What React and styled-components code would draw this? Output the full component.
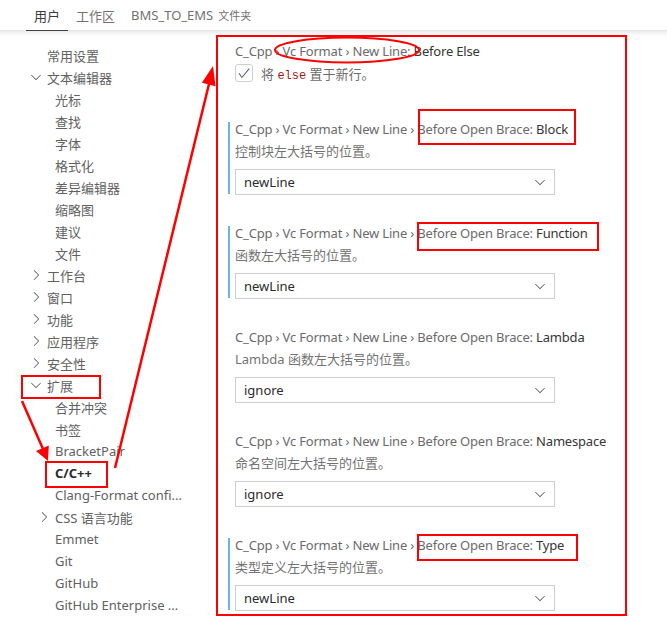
import React from "react";
import styled, { createGlobalStyle } from "styled-components";

const GlobalStyle = createGlobalStyle`
  body {
    margin: 0;
    background: #fff;
    font-family: "Noto Sans", "Noto Sans CJK SC", sans-serif;
  }
`;

const treeItems = [
  { label: "常用设置", level: 0 },
  { label: "文本编辑器", level: 0, chevron: "down" },
  { label: "光标", level: 1 },
  { label: "查找", level: 1 },
  { label: "字体", level: 1 },
  { label: "格式化", level: 1 },
  { label: "差异编辑器", level: 1 },
  { label: "缩略图", level: 1 },
  { label: "建议", level: 1 },
  { label: "文件", level: 1 },
  { label: "工作台", level: 0, chevron: "right" },
  { label: "窗口", level: 0, chevron: "right" },
  { label: "功能", level: 0, chevron: "right" },
  { label: "应用程序", level: 0, chevron: "right" },
  { label: "安全性", level: 0, chevron: "right" },
  { label: "扩展", level: 0, chevron: "down" },
  { label: "合并冲突", level: 1 },
  { label: "书签", level: 1 },
  { label: "BracketPair", level: 1 },
  { label: "C/C++", level: 1, active: true },
  { label: "Clang-Format confi...", level: 1 },
  { label: "CSS 语言功能", level: 1, chevron: "right" },
  { label: "Emmet", level: 1 },
  { label: "Git", level: 1 },
  { label: "GitHub", level: 1 },
  { label: "GitHub Enterprise ...", level: 1 },
];

const PREFIX = "C_Cpp › Vc Format › New Line › Before Open Brace: ";

const settings = [
  { prefix: PREFIX, label: "Block", desc: "控制块左大括号的位置。", value: "newLine", modified: true },
  { prefix: PREFIX, label: "Function", desc: "函数左大括号的位置。", value: "newLine", modified: true },
  { prefix: PREFIX, label: "Lambda", desc: "Lambda 函数左大括号的位置。", value: "ignore" },
  { prefix: PREFIX, label: "Namespace", desc: "命名空间左大括号的位置。", value: "ignore" },
  { prefix: PREFIX, label: "Type", desc: "类型定义左大括号的位置。", value: "newLine", modified: true },
];

function Chevron({ dir }) {
  const d =
    dir === "down"
      ? "M7.976 10.072l4.357-4.357.62.618L8.284 11h-.618L3 6.333l.619-.618 4.357 4.357z"
      : "M10.072 8.024L5.715 3.667l.618-.62L11 7.716v.618L6.333 13l-.618-.619 4.357-4.357z";
  return (
    <svg width="16" height="16" viewBox="0 0 16 16" fill="#5f6670">
      <path d={d} />
    </svg>
  );
}

export default function App() {
  return (
    <>
      <GlobalStyle />
      <Page>
        <TabBar>
          <Tab $active>用户</Tab>
          <Tab>工作区</Tab>
          <Tab>
            BMS_TO_EMS<Small>文件夹</Small>
          </Tab>
        </TabBar>
        <Main>
          <Tree>
            {treeItems.map((item) => (
              <TreeRow key={item.label} $level={item.level} $active={item.active}>
                <ChevronSlot>{item.chevron && <Chevron dir={item.chevron} />}</ChevronSlot>
                {item.label}
              </TreeRow>
            ))}
          </Tree>
          <SettingsList>
            <Setting>
              <Title>
                C_Cpp › Vc Format › New Line: <Label>Before Else</Label>
              </Title>
              <CheckRow>
                <Checkbox>
                  <svg width="14" height="14" viewBox="0 0 16 16" fill="#3f5877">
                    <path d="M14.431 3.323l-8.47 10-.79-.036-3.35-4.77.818-.574 2.978 4.24 8.051-9.506.764.646z" />
                  </svg>
                </Checkbox>
                <span>
                  将 <Code>else</Code> 置于新行。
                </span>
              </CheckRow>
            </Setting>
            {settings.map((s) => (
              <Setting key={s.label} $modified={s.modified}>
                <Title>
                  {s.prefix}
                  <Label>{s.label}</Label>
                </Title>
                <Desc>{s.desc}</Desc>
                <Select>
                  <span>{s.value}</span>
                  <Chevron dir="down" />
                </Select>
              </Setting>
            ))}
          </SettingsList>
        </Main>
        <Annotations viewBox="0 0 667 620">
          <g fill="none" stroke="#f00" strokeWidth="2">
            <rect x="217" y="36" width="409" height="579" />
            <ellipse cx="347" cy="50" rx="72" ry="12.5" />
            <rect x="419" y="110" width="156" height="34" />
            <rect x="418" y="223" width="180" height="27" />
            <rect x="418" y="535" width="159" height="25" />
            <rect x="22" y="376" width="78" height="22" />
            <rect x="46" y="462" width="61" height="25" />
            <line x1="115" y1="468" x2="209" y2="84" strokeWidth="2.5" />
            <line x1="22" y1="401" x2="43" y2="449" strokeWidth="2.5" />
          </g>
          <g fill="#f00">
            <polygon points="213,66 215.5,86.2 201.9,82.8" />
            <polygon points="48,461 48.8,445.4 36,451" />
          </g>
        </Annotations>
      </Page>
    </>
  );
}

const Page = styled.div`
  position: relative;
  width: 667px;
  height: 620px;
  overflow: hidden;
  background: #fff;
`;

const TabBar = styled.div`
  display: flex;
  height: 30px;
  padding-left: 26px;
  border-bottom: 1px solid #e5e5e5;
  font-size: 13px;
`;

const Tab = styled.div`
  display: flex;
  align-items: center;
  padding: 0 8px;
  color: ${(p) => (p.$active ? "#3b3b3b" : "#717171")};
  border-bottom: 1px solid ${(p) => (p.$active ? "#424242" : "transparent")};
  margin-bottom: -1px;
`;

const Small = styled.span`
  font-size: 11px;
  margin-left: 5px;
`;

const Main = styled.div`
  display: flex;
  height: 589px;
  box-shadow: inset 0 6px 6px -6px #d4d4d4;
`;

const Tree = styled.div`
  width: 214px;
  padding-top: 13px;
  flex-shrink: 0;
`;

const TreeRow = styled.div`
  display: flex;
  align-items: center;
  height: 22px;
  padding-left: ${(p) => 28 + p.$level * 8}px;
  font-size: 13px;
  color: ${(p) => (p.$active ? "#2b2b2b" : "#616161")};
  font-weight: ${(p) => (p.$active ? 700 : 400)};
  white-space: nowrap;
`;

const ChevronSlot = styled.span`
  display: flex;
  width: 19px;
  flex-shrink: 0;
`;

const SettingsList = styled.div`
  flex: 1;
  padding: 9px 0 0 14px;
`;

const Setting = styled.div`
  display: flex;
  flex-direction: column;
  align-items: flex-start;
  padding-left: 7px;
  margin-bottom: 27px;
  background: ${(p) =>
    p.$modified
      ? "linear-gradient(#6fb3e3, #6fb3e3) no-repeat 0 4px / 2px calc(100% - 5px)"
      : "none"};
`;

const Title = styled.div`
  font-size: 13px;
  line-height: 22px;
  letter-spacing: -0.18px;
  color: #6b6b6b;
  white-space: nowrap;
`;

const Label = styled.span`
  color: #363636;
`;

const Desc = styled.div`
  font-size: 13px;
  line-height: 22px;
  color: #737373;
`;

const CheckRow = styled.div`
  display: flex;
  align-items: center;
  height: 22px;
  margin-bottom: 7px;
  font-size: 13px;
  color: #6b6b6b;
  white-space: pre;
`;

const Checkbox = styled.span`
  display: flex;
  align-items: center;
  justify-content: center;
  width: 16px;
  height: 16px;
  margin-right: 8px;
  border: 1px solid #cfcfcf;
  border-radius: 3px;
`;

const Code = styled.span`
  font-family: "Liberation Mono", "DejaVu Sans Mono", monospace;
  font-size: 12px;
  color: #a31515;
`;

const Select = styled.div`
  display: flex;
  align-items: center;
  justify-content: space-between;
  box-sizing: border-box;
  width: 320px;
  height: 26px;
  margin-top: 7px;
  padding: 0 6px 0 8px;
  border: 1px solid #cecece;
  font-size: 13px;
  color: #2b2b2b;
`;

const Annotations = styled.svg`
  position: absolute;
  top: 0;
  left: 0;
  width: 667px;
  height: 620px;
  pointer-events: none;
`;
